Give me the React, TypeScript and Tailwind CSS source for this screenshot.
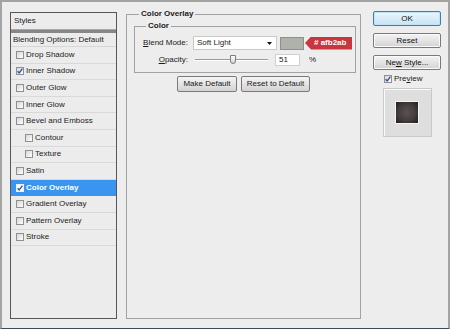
import React from "react";

type Item = { label: string; checked?: boolean; indent?: boolean; active?: boolean };

const items: Item[] = [
  { label: "Drop Shadow" },
  { label: "Inner Shadow", checked: true },
  { label: "Outer Glow" },
  { label: "Inner Glow" },
  { label: "Bevel and Emboss" },
  { label: "Contour", indent: true },
  { label: "Texture", indent: true },
  { label: "Satin" },
  { label: "Color Overlay", checked: true, active: true },
  { label: "Gradient Overlay" },
  { label: "Pattern Overlay" },
  { label: "Stroke" },
];

function Check({ checked, active }: { checked?: boolean; active?: boolean }) {
  return (
    <span
      className={`relative h-2 w-2 shrink-0 border ${
        active ? "border-[#e8f2ff] bg-white" : "border-[#909090] bg-gradient-to-br from-[#d6d6d6] to-white"
      }`}
    >
      {checked && (
        <svg className="absolute -left-px -top-px h-2 w-2" viewBox="0 0 8 8" fill="none">
          <path d="M1.6 4.2 L3.2 6 L6.4 1.6" stroke="#2a51a6" strokeWidth="1.3" />
        </svg>
      )}
    </span>
  );
}

function Btn({ children, w, primary }: { children: React.ReactNode; w: string; primary?: boolean }) {
  return (
    <div
      className={`flex h-[15px] ${w} items-center justify-center rounded-[2px] border ${
        primary
          ? "border-[#3b7eb6] bg-gradient-to-b from-[#eaf6fd] to-[#c9e3f3] shadow-[inset_0_0_0_1px_#bfe4f8]"
          : "border-[#7a7a7a] bg-gradient-to-b from-[#f4f4f4] via-[#e4e4e4] to-[#d2d2d2] shadow-[inset_0_0_0_1px_#fbfbfb]"
      } text-[8px] leading-none text-[#111]`}
    >
      {children}
    </div>
  );
}

export default function App() {
  return (
    <div className="flex h-[329px] w-[450px] items-start border-l-2 border-r-2 border-t-2 border-b border-[#a3a3a3] border-b-[#3d4956] bg-[#ededed] pl-[8px] pt-[7px] font-['Liberation_Sans',Arial,sans-serif] text-[8px] text-[#1b1b1b]">
      {/* styles list */}
      <div className="mt-[3px] flex h-[307px] w-[107px] flex-col border border-[#565656] bg-[#ececec]">
        <div className="flex h-[16px] items-center pl-[3px]">Styles</div>
        <div className="h-[4px] border-t border-[#a8a8a8] bg-[#878787]" />
        <div className="flex h-[14px] items-center border-b border-[#d6d6d6] pl-[2px]">
          Blending Options: Default
        </div>
        {items.map((it) => (
          <div
            key={it.label}
            className={`flex h-[16.6px] items-center gap-[2px] border-b ${
              it.active ? "border-[#3a95f0] bg-[#3a95f0] font-bold text-white" : "border-[#d9d9d9]"
            } ${it.indent ? "pl-[14px]" : "pl-[5px]"}`}
          >
            <Check checked={it.checked} active={it.active} />
            <span>{it.label}</span>
          </div>
        ))}
      </div>

      {/* color overlay panel */}
      <fieldset className="ml-[9px] h-[310px] w-[235px] border border-[#a2a2a2]">
        <legend className="ml-[12px] px-[2px] text-[8px] font-bold leading-[10px]">Color Overlay</legend>
        <fieldset className="ml-[7px] mt-[2px] w-[222px] border border-[#a2a2a2] pb-[6px] pt-[5px]">
          <legend className="ml-[11px] px-[2px] text-[8px] font-bold leading-[10px]">Color</legend>
          <div className="flex h-[14px] items-center">
            <div className="w-[55px] pr-[2px] text-right">
              <span className="underline">B</span>lend Mode:
            </div>
            <div className="ml-[3px] flex h-[14px] w-[84px] items-center justify-between border border-[#c9c9c9] bg-white pl-[3px] pr-[4px]">
              <span>Soft Light</span>
              <svg width="5" height="3" viewBox="0 0 5 3">
                <path d="M0 0 H5 L2.5 3 Z" fill="#111" />
              </svg>
            </div>
            <div className="ml-[3px] h-[13px] w-[24px] border border-[#8e8e8e] bg-[#afb2ab]" />
            <div className="ml-[1px] flex h-[13px] w-[47px] items-center bg-[#c8373d] pl-[9px] font-bold text-white [clip-path:polygon(6px_0,100%_0,100%_100%,6px_100%,0_50%)]">
              # afb2ab
            </div>
          </div>
          <div className="mt-[4px] flex h-[12px] items-center">
            <div className="w-[55px] pr-[2px] text-right">
              <span className="underline">O</span>pacity:
            </div>
            <div className="relative ml-[3px] h-[12px] w-[79px]">
              <div className="absolute left-[2px] right-[4px] top-[5px] h-[2px] border-t border-[#9a9a9a] bg-white" />
              <div className="absolute left-[37px] top-[1px] h-[9px] w-[6px] rounded-b-[3px] border border-[#7d7d7d] bg-gradient-to-b from-white to-[#d4d4d4]" />
            </div>
            <div className="ml-[3px] flex h-[12px] w-[25px] items-center border border-[#d0d0d0] bg-white pl-[3px]">51</div>
            <span className="ml-[9px]">%</span>
          </div>
        </fieldset>
        <div className="mt-[3px] flex justify-center gap-[4px]">
          <div className="flex h-[16px] w-[60px] items-center justify-center rounded-[2px] border border-[#7a7a7a] bg-gradient-to-b from-[#f4f4f4] via-[#e4e4e4] to-[#d2d2d2]">
            Make Default
          </div>
          <div className="flex h-[16px] w-[69px] items-center justify-center rounded-[2px] border border-[#7a7a7a] bg-gradient-to-b from-[#f4f4f4] via-[#e4e4e4] to-[#d2d2d2]">
            Reset to Default
          </div>
        </div>
      </fieldset>

      {/* right column */}
      <div className="ml-[12px] mt-[2px] flex w-[68px] flex-col items-center">
        <Btn w="w-[68px]" primary>OK</Btn>
        <div className="mt-[7px]">
          <Btn w="w-[68px]">Reset</Btn>
        </div>
        <div className="mt-[7px]">
          <Btn w="w-[68px]">
            Ne<span className="underline">w</span>&nbsp;Style...
          </Btn>
        </div>
        <div className="mt-[4px] flex h-[9px] items-center gap-[2px] self-start pl-[11px]">
          <Check checked />
          <span>
            Pre<span className="underline">v</span>iew
          </span>
        </div>
        <div className="mt-[5px] flex h-[49px] w-[49px] items-center justify-center border border-[#c9c9c9] bg-[#dedede] shadow-[inset_1px_1px_0_#fafafa]">
          <div className="h-[23px] w-[24px] border border-[#f4f4f4] bg-[radial-gradient(circle,#5a5152_0%,#443d3e_55%,#221d1e_100%)]" />
        </div>
      </div>
    </div>
  );
}
